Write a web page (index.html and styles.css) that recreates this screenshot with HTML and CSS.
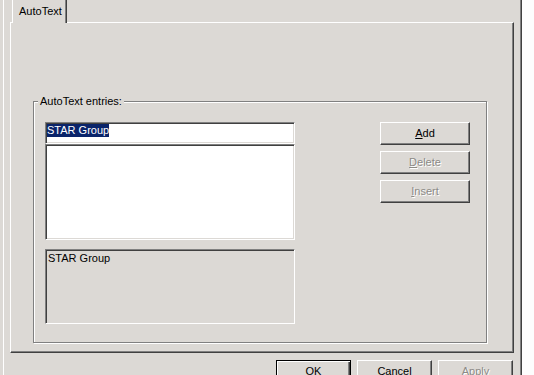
FILE: index.html
```html
<!DOCTYPE html>
<html lang="en">
<head>
    <meta charset="UTF-8">
    <meta name="viewport" content="width=device-width, initial-scale=1.0">
    <title>AutoText</title>
    <link rel="stylesheet" href="styles.css">
</head>
<body>
    <div class="dialog">
        <div class="tabs">
            <div class="tab">AutoText</div>
        </div>
        <div class="panel">
            <div class="group">
                <div class="group-title"><span>AutoText entries:</span></div>
                <div class="group-body">
                    <div class="entries">
                        <div class="edit"><span class="selected">STAR Group</span></div>
                        <div class="list"></div>
                        <div class="preview">STAR Group</div>
                    </div>
                    <div class="actions">
                        <button class="btn"><u>A</u>dd</button>
                        <button class="btn" disabled><u>D</u>elete</button>
                        <button class="btn" disabled><u>I</u>nsert</button>
                    </div>
                </div>
            </div>
        </div>
        <div class="footer">
            <button class="btn default">OK</button>
            <button class="btn">Cancel</button>
            <button class="btn" disabled>Apply</button>
        </div>
    </div>
</body>
</html>
```

FILE: styles.css
```css
body {
    margin: 0;
    background: #fdfdfd;
    font-family: "Liberation Sans", Arial, sans-serif;
    font-size: 11px;
    line-height: 13px;
    color: #000;
}
.dialog {
    width: 510px;
    height: 375px;
    padding-left: 10px;
    background: #dcd9d5;
    border-right: 1px solid #808080;
    box-shadow: 1px 0 0 #404040, inset 3px 0 0 #dcd9d5, inset 4px 0 0 #fff;
    overflow: hidden;
}
.tabs {
    display: flex;
    height: 22px;
    padding-left: 2px;
}
.tab {
    position: relative;
    height: 18px;
    margin-bottom: -1px;
    padding: 5px 4px 0 6px;
    background: #dcd9d5;
    border-left: 1px solid #fff;
    border-right: 1px solid #404040;
    box-shadow: inset -1px 0 0 #808080;
}
.panel {
    width: 502px;
    height: 329px;
    border: 1px solid;
    border-color: #fff #404040 #404040 #fff;
    box-shadow: inset -1px -1px 0 #808080;
}
.group {
    width: 452px;
    height: 240px;
    margin: 78px 0 0 22px;
    border: 1px solid #808080;
    box-shadow: 1px 1px 0 #fff, inset 1px 1px 0 #fff;
}
.group-title {
    margin: -7px 0 0 4px;
}
.group-title span {
    padding: 0 2px;
    background: #dcd9d5;
}
.group-body {
    display: flex;
    margin-top: 14px;
    padding: 0 16px 0 11px;
}
.entries {
    width: 250px;
}
.edit, .list, .preview {
    box-sizing: border-box;
    border: 1px solid;
    border-color: #808080 #fff #fff #808080;
    box-shadow: inset 1px 1px 0 #404040, inset -1px -1px 0 #dcd9d5;
}
.edit {
    height: 22px;
    padding: 1px 0 0 1px;
    background: #fff;
}
.selected {
    display: inline-block;
    background: #0a246a;
    color: #fff;
}
.list {
    height: 96px;
    background: #fff;
}
.preview {
    height: 75px;
    margin-top: 9px;
    padding: 2px 0 0 2px;
}
.actions {
    display: flex;
    flex-direction: column;
    gap: 6px;
    margin-left: auto;
}
.btn {
    box-sizing: border-box;
    width: 90px;
    height: 23px;
    padding: 0;
    font: inherit;
    color: #000;
    background: #dcd9d5;
    border: 1px solid;
    border-color: #fff #404040 #404040 #fff;
    box-shadow: inset -1px -1px 0 #808080;
}
.btn:disabled {
    color: #8c8a86;
    text-shadow: 1px 1px 0 #fff;
}
.footer {
    display: flex;
    justify-content: flex-end;
    gap: 6px;
    width: 503px;
    margin-top: 7px;
}
.footer .btn {
    width: 75px;
}
.btn.default {
    border-color: #000;
    box-shadow: inset 1px 1px 0 #fff, inset -1px -1px 0 #404040, inset -2px -2px 0 #808080;
}
```
